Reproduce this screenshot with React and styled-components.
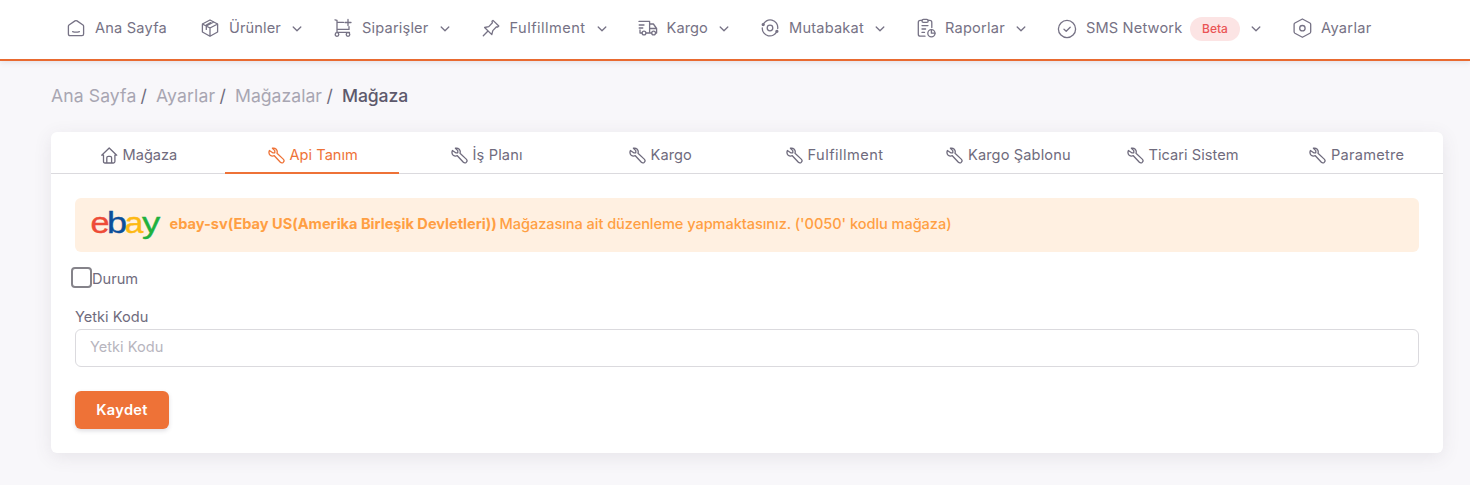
import React from "react";
import styled, { createGlobalStyle } from "styled-components";

const Global = createGlobalStyle`
  * { box-sizing: border-box; }
  body {
    margin: 0;
    min-height: 485px;
    background: #f8f7fa;
    color: #6f6b7d;
    font-family: Inter, "Liberation Sans", sans-serif;
    font-size: 14.6px;
    line-height: 22px;
  }
`;

const Header = styled.header`
  height: 61px;
  padding: 0 49px;
  display: flex;
  align-items: flex-start;
  background: #fff;
  border-bottom: 2px solid #e96a30;
  box-shadow: 0 1px 6px rgba(75, 70, 92, 0.14);
`;

const NavItem = styled.a`
  display: flex;
  align-items: center;
  height: 56px;
  padding: 0 16px;
  color: #767285;
`;

const Svg = styled.svg`
  flex: none;
  fill: none;
  stroke: currentColor;
  stroke-width: 1.3;
  stroke-linecap: round;
  stroke-linejoin: round;
`;

const NavIcon = styled(Svg)`
  margin-right: 8px;
`;

const Chevron = styled(Svg)`
  margin: 2px -5px 0 8px;
`;

const Label = styled.span`
  flex: none;
  width: ${(p) => (p.$w ? p.$w + "px" : "auto")};
  letter-spacing: ${(p) => p.$ls || 0}px;
  white-space: nowrap;
`;

const Beta = styled.span`
  width: 50px;
  height: 24px;
  margin: 1px 0 0 8px;
  border-radius: 12px;
  background: #fce4e4;
  color: #ea5455;
  font-size: 12px;
  font-weight: 500;
  line-height: 24px;
  text-align: center;
`;

const Breadcrumb = styled.nav`
  display: flex;
  height: 71px;
  padding: 0 51px 2px;
  align-items: center;
  font-size: 17.6px;
`;

const Crumb = styled(Label)`
  color: ${(p) => (p.$current ? "#5d596c" : "#a8a6b2")};
  font-weight: ${(p) => (p.$current ? 500 : 400)};
`;

const Slash = styled.span`
  width: 20px;
  padding-left: 4.5px;
  color: #6f6b7d;
`;

const Card = styled.main`
  width: 1392px;
  height: 321px;
  margin-left: 51px;
  background: #fff;
  border-radius: 6px;
  box-shadow: 0 4px 18px rgba(75, 70, 92, 0.1);
`;

const Tabs = styled.div`
  display: grid;
  grid-template-columns: repeat(8, 1fr);
  height: 42px;
`;

const Tab = styled.div`
  display: flex;
  justify-content: center;
  align-items: center;
  gap: 5px;
  padding: 4px 0 0 1px;
  color: ${(p) => (p.$active ? "#ee7237" : "#6f6b7d")};
  box-shadow: inset 0 ${(p) => (p.$active ? "-2px #ee7237" : "-1px #dbdade")};
`;

const Body = styled.div`
  display: flex;
  flex-direction: column;
  align-items: stretch;
  padding: 24px;
`;

const Alert = styled.div`
  display: flex;
  align-items: center;
  height: 54px;
  padding: 0 16px 2px;
  border-radius: 6px;
  background: #fff0e1;
  color: #ff9f43;
  font-weight: 500;
`;

const Logo = styled.svg`
  flex: none;
  margin: 2px 5.5px 0 -2px;
  font-family: "Liberation Sans", sans-serif;
  font-size: 30px;
`;

const AlertName = styled(Label)`
  font-weight: 700;
  margin-right: 3.5px;
`;

const CheckRow = styled.label`
  display: flex;
  align-items: center;
  height: 22px;
  margin: 15px 0 0 -4px;
  padding-top: 1px;
`;

const Checkbox = styled.input`
  appearance: none;
  flex: none;
  width: 21px;
  height: 21px;
  margin: -3px 0 0;
  border: 2px solid #85838a;
  border-radius: 4px;
  background: #fff;
`;

const FieldLabel = styled.label`
  height: 22px;
  margin-top: 17px;
`;

const Input = styled.input`
  height: 38px;
  margin-top: 1px;
  padding: 0 14px 2px;
  border: 1px solid #dbdade;
  border-radius: 6px;
  color: #6f6b7d;
  font: inherit;
  &::placeholder { color: #b7b5be; opacity: 1; }
`;

const Save = styled.button`
  width: 94px;
  height: 38px;
  margin-top: 24px;
  padding: 0;
  border: 0;
  border-radius: 6px;
  background: #ee7237;
  color: #fff;
  box-shadow: 0 2px 4px rgba(75, 70, 92, 0.18);
  font: inherit;
  font-weight: 600;
  letter-spacing: 0.3px;
`;

const icons = {
  home: (
    <path d="M17 18.6H5Q3.4 18.6 3.4 17V9.3Q3.4 8.5 4 8L10 3.9Q11 3.2 12 3.9L18 8Q18.6 8.5 18.6 9.3V17Q18.6 18.6 17 18.6ZM7.6 14.6Q11 15.8 14.4 14.6" />
  ),
  box: (
    <path d="M11 3L18.6 7V15L11 19.3L3.4 15V7ZM3.4 7L11 11L18.6 7M11 11V19.3M14.8 5L7.3 9V12.4M11.6 5.6L7.3 8" />
  ),
  cart: (
    <>
      <path d="M3 2.8L5 3.4V15.4H17.5M5 5.4H11.5M5.5 12.4H17V9.6M16 2.5V8.5M13 5.5H19" />
      <circle cx="5" cy="17.5" r="1.8" />
      <circle cx="16" cy="17.5" r="1.8" />
    </>
  ),
  pin: (
    <path d="M13 3.4L18.8 9L17.7 10L16.5 9.8L12.8 13.6L11.8 17.6L4.6 10.5L8.8 9.6L12.4 5.8L12 4.3ZM8 14L3.3 18.8" />
  ),
  truck: (
    <>
      <path d="M2 4.4H12.6V16H9M5 16H3V13M12.6 7H16.4L19.6 11.5V16H18.6M12.6 16H14.6M12.6 11.5H19.6M2.2 8H7M2.2 11H5.8" />
      <circle cx="7" cy="16" r="1.9" />
      <circle cx="16.6" cy="16" r="1.9" />
    </>
  ),
  sync: (
    <>
      <circle cx="11" cy="11" r="2.8" />
      <path d="M4 8A7.6 7.6 0 0 1 18.7 11.5M18 14A7.6 7.6 0 0 1 3.3 10.8" />
      <circle cx="4.2" cy="7.6" r="1" fill="currentColor" />
      <circle cx="17.9" cy="14.3" r="1" fill="currentColor" />
    </>
  ),
  report: (
    <>
      <path d="M6.8 3.4H5.3Q3.3 3.4 3.3 5.4V17.2Q3.3 19.2 5.3 19.2H10M13.2 3.4H14.8Q16.8 3.4 16.8 5.4V10.5M7 8.6H13M7 12H10.6M7 15.4H9.5" />
      <rect x="7" y="2.4" width="6.2" height="3" rx="1.4" />
      <circle cx="16.4" cy="16.2" r="3.6" />
      <path d="M16.4 12.7V16.2H20" />
    </>
  ),
  check: (
    <>
      <circle cx="11" cy="12" r="8.6" />
      <path d="M8 12.2L10.2 14.2L14.2 10.2" />
    </>
  ),
  hex: (
    <>
      <path d="M11.4 2L18.9 6Q19.7 6.5 19.7 7.4V14.8Q19.7 15.7 18.9 16.2L11.4 20.3L3.9 16.2Q3.1 15.7 3.1 14.8V7.4Q3.1 6.5 3.9 6Z" />
      <circle cx="11.4" cy="11.2" r="2.7" />
    </>
  ),
};

const nav = [
  { icon: "home", text: "Ana Sayfa", w: 72, ls: 0.2 },
  { icon: "box", text: "Ürünler", w: 52, ls: 0.1, menu: true },
  { icon: "cart", text: "Siparişler", w: 66.5, ls: 0.18, menu: true },
  { icon: "pin", text: "Fulfillment", w: 76, ls: 0.45, menu: true },
  { icon: "truck", text: "Kargo", w: 41.5, ls: 0.1, menu: true },
  { icon: "sync", text: "Mutabakat", w: 75, ls: 0.2, menu: true },
  { icon: "report", text: "Raporlar", w: 60, ls: 0.22, menu: true },
  { icon: "check", text: "SMS Network", w: 96, ls: 0.15, menu: true, beta: true },
  { icon: "hex", text: "Ayarlar", w: 51, ls: 0.32 },
];

const crumbs = [
  { text: "Ana Sayfa", w: 85, ls: 0.1 },
  { text: "Ayarlar", w: 59, ls: 0.12 },
  { text: "Mağazalar", w: 87, ls: 0.02 },
  { text: "Mağaza", w: 66, ls: -0.12 },
];

const tabs = [
  { text: "Mağaza", w: 54, house: true },
  { text: "Api Tanım", w: 68, ls: 0.03 },
  { text: "İş Planı", w: 50, ls: 0.15 },
  { text: "Kargo", w: 42, ls: 0.1 },
  { text: "Fulfillment", w: 76, ls: 0.45 },
  { text: "Kargo Şablonu", w: 103, ls: 0.12 },
  { text: "Ticari Sistem", w: 90, ls: 0.05 },
  { text: "Parametre", w: 73, ls: 0.25 },
];

const TabIcon = ({ house }) => (
  <Svg width="17" height="17" viewBox="0 0 17 17">
    {house ? (
      <path d="M.7 8.2L8.2 1L15.7 8.2H13.9V14.5Q13.9 16 12.4 16H4Q2.5 16 2.5 14.5V8.2ZM5.8 16V10.8Q5.8 9.3 7.3 9.3H9.1Q10.6 9.3 10.6 10.8V16" />
    ) : (
      <path d="M4.4 1.2L6.8 3.6V5.8H4.7L1.4 3.5Q.2 6.5 2.2 8.2Q4 9.6 6.3 8.7L12.4 15.3Q13.7 16.5 15.2 15.4Q16.8 13.9 15.5 12.4L9 6.3Q9.8 4 8.2 2.2Q6.7 .7 4.4 1.2Z" />
    )}
  </Svg>
);

const letters = [
  { ch: "e", x: 1.4, sx: 1.14, fill: "#ee4c38" },
  { ch: "b", x: 18, sx: 1.2, fill: "#0b4f9b" },
  { ch: "a", x: 35.8, sx: 1.12, fill: "#fdb913" },
  { ch: "y", x: 53, sx: 1.22, fill: "#1fb13e" },
];

export default function App() {
  return (
    <>
      <Global />
      <Header>
        {nav.map((n) => (
          <NavItem key={n.text}>
            <NavIcon width="22" height="22" viewBox="0 0 22 22">{icons[n.icon]}</NavIcon>
            <Label $w={n.w} $ls={n.ls}>{n.text}</Label>
            {n.beta && <Beta>Beta</Beta>}
            {n.menu && (
              <Chevron width="16" height="16" viewBox="0 0 16 16">
                <path d="M4.2 6L8 9.8L11.8 6" />
              </Chevron>
            )}
          </NavItem>
        ))}
      </Header>
      <Breadcrumb>
        {crumbs.map((c, i) => (
          <React.Fragment key={c.text}>
            <Crumb $w={c.w} $ls={c.ls} $current={i === 3}>{c.text}</Crumb>
            {i < 3 && <Slash>/</Slash>}
          </React.Fragment>
        ))}
      </Breadcrumb>
      <Card>
        <Tabs>
          {tabs.map((t) => (
            <Tab key={t.text} $active={t.text === "Api Tanım"}>
              <TabIcon house={t.house} />
              <Label $w={t.w} $ls={t.ls}>{t.text}</Label>
            </Tab>
          ))}
        </Tabs>
        <Body>
          <Alert>
            <Logo width="75" height="40" viewBox="0 0 75 40">
              {letters.map((l) => (
                <text
                  key={l.ch}
                  transform={`translate(${l.x} 28.3) scale(${l.sx} 1)`}
                  fill={l.fill}
                  stroke={l.fill}
                  strokeWidth="0.4"
                >
                  {l.ch}
                </text>
              ))}
            </Logo>
            <AlertName $w={326.5} $ls={-0.01}>ebay-sv(Ebay US(Amerika Birleşik Devletleri))</AlertName>
            <Label $ls={-0.07}>Mağazasına ait düzenleme yapmaktasınız. ('0050' kodlu mağaza)</Label>
          </Alert>
          <CheckRow>
            <Checkbox type="checkbox" />
            <Label>Durum</Label>
          </CheckRow>
          <FieldLabel>Yetki Kodu</FieldLabel>
          <Input placeholder="Yetki Kodu" />
          <Save>Kaydet</Save>
        </Body>
      </Card>
    </>
  );
}
